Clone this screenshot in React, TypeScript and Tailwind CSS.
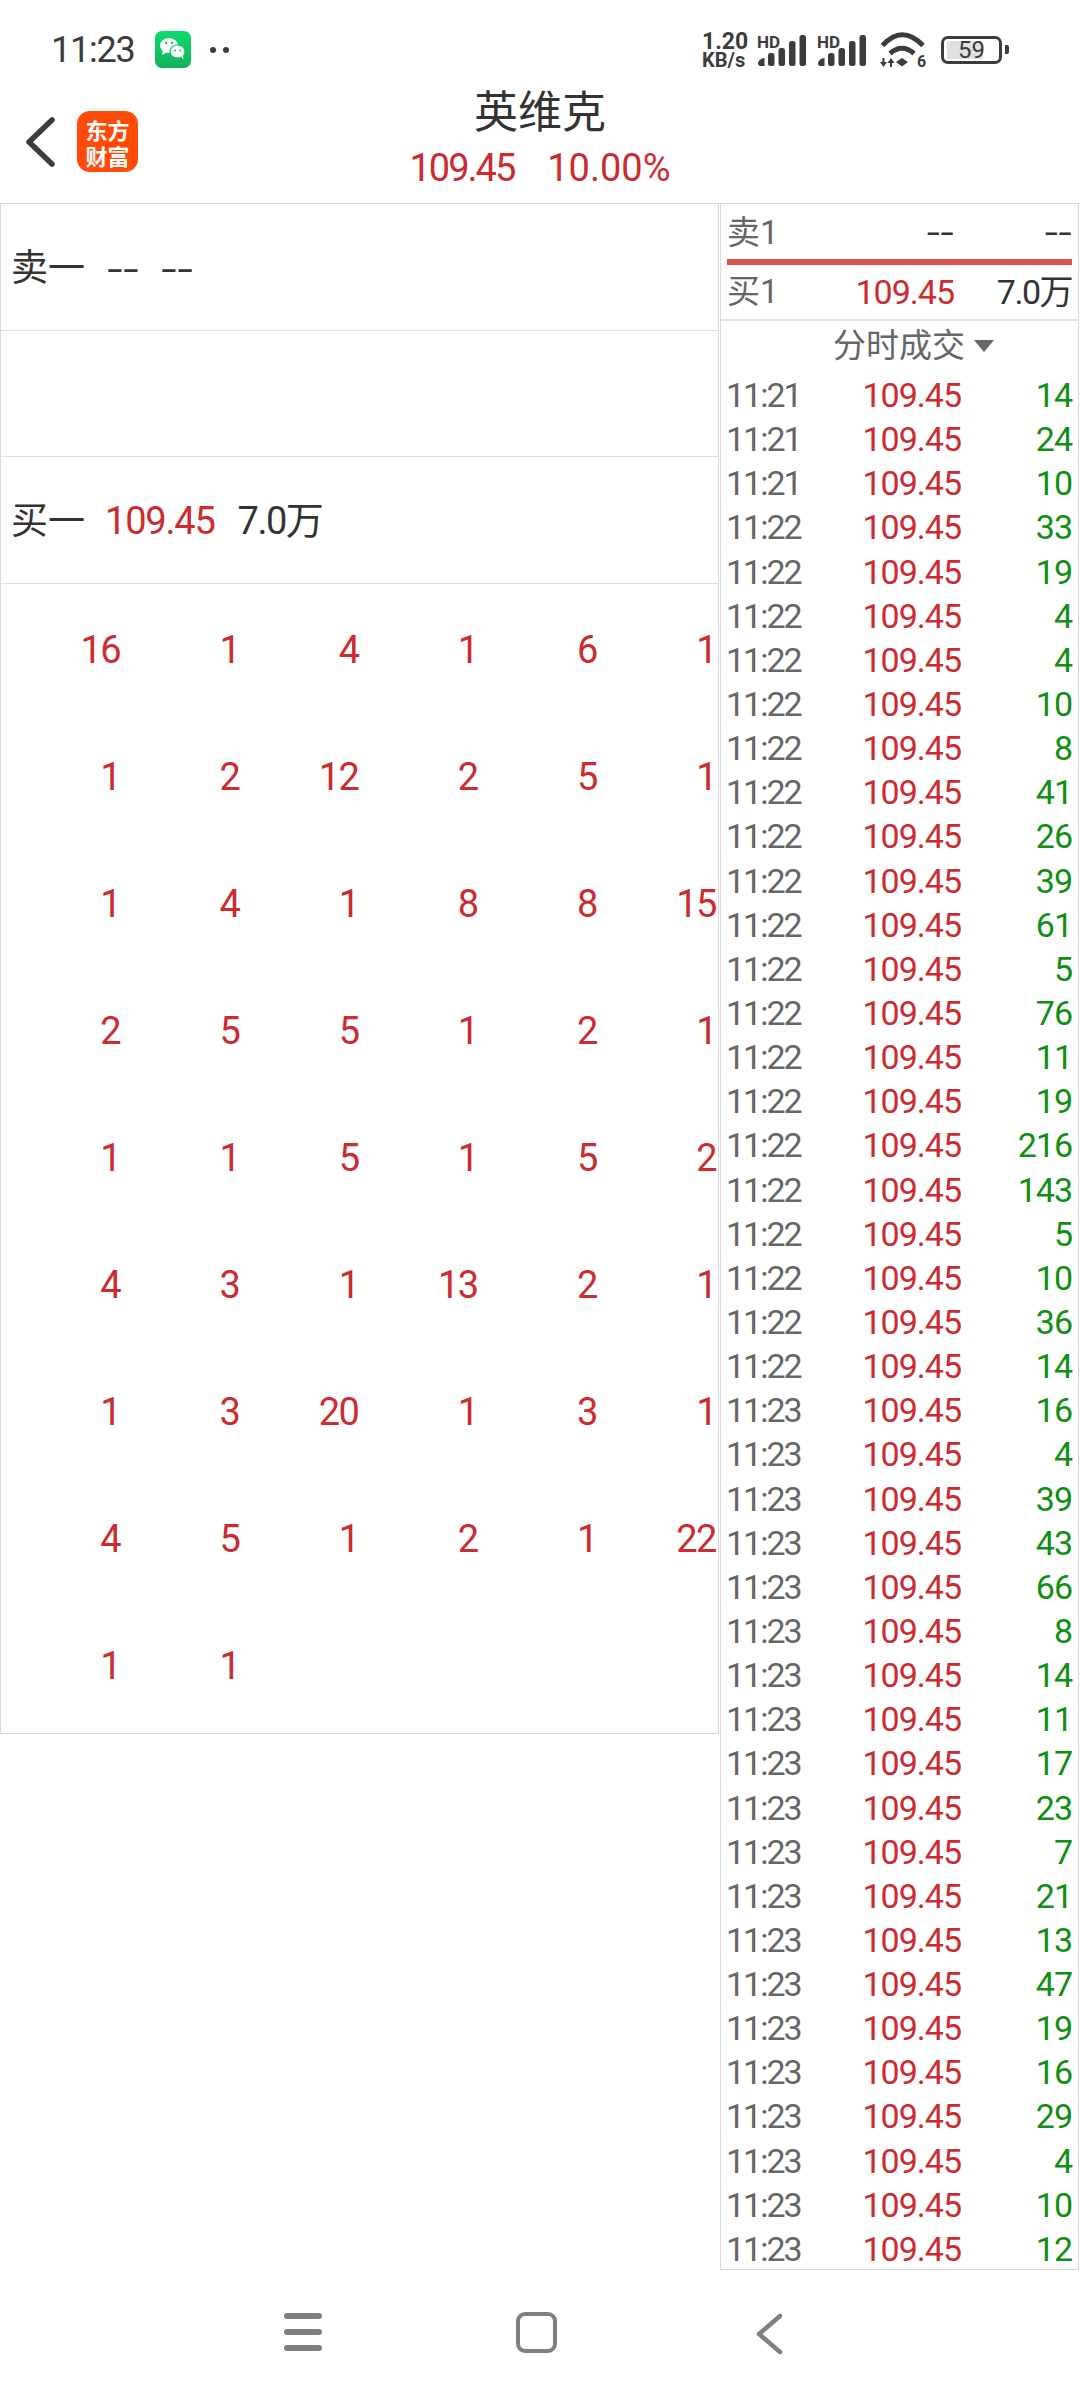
import React from 'react';

const sans = "font-['Roboto','Noto_Sans_CJK_SC',sans-serif]";

const gridValues = [
  16, 1, 4, 1, 6, 1,
  1, 2, 12, 2, 5, 1,
  1, 4, 1, 8, 8, 15,
  2, 5, 5, 1, 2, 1,
  1, 1, 5, 1, 5, 2,
  4, 3, 1, 13, 2, 1,
  1, 3, 20, 1, 3, 1,
  4, 5, 1, 2, 1, 22,
  1, 1,
];

const ticks: [string, number][] = [
  ['11:21', 14], ['11:21', 24], ['11:21', 10],
  ['11:22', 33], ['11:22', 19], ['11:22', 4], ['11:22', 4], ['11:22', 10],
  ['11:22', 8], ['11:22', 41], ['11:22', 26], ['11:22', 39], ['11:22', 61],
  ['11:22', 5], ['11:22', 76], ['11:22', 11], ['11:22', 19], ['11:22', 216],
  ['11:22', 143], ['11:22', 5], ['11:22', 10], ['11:22', 36], ['11:22', 14],
  ['11:23', 16], ['11:23', 4], ['11:23', 39], ['11:23', 43], ['11:23', 66],
  ['11:23', 8], ['11:23', 14], ['11:23', 11], ['11:23', 17], ['11:23', 23],
  ['11:23', 7], ['11:23', 21], ['11:23', 13], ['11:23', 47], ['11:23', 19],
  ['11:23', 16], ['11:23', 29], ['11:23', 4], ['11:23', 10], ['11:23', 12],
];

function Signal() {
  return (
    <div className="relative w-[50px] h-[32px]">
      <span className="absolute left-0 top-0 text-[17px] leading-[17px] font-bold text-[#3c3c3c] font-['Roboto',sans-serif]">HD</span>
      <svg className="absolute left-0 top-0" width="50" height="32" viewBox="0 0 50 32" fill="#3c3c3c">
        <path d="M1 29.5C1 27 4 24 7.5 24v8H3.5C2 32 1 31 1 29.5z" />
        <rect x="11" y="19" width="6.5" height="13" rx="2.5" />
        <rect x="21.5" y="14" width="6.5" height="18" rx="2.5" />
        <rect x="32" y="7" width="6.5" height="25" rx="2.5" />
        <rect x="42.5" y="1" width="6.5" height="31" rx="2.5" />
      </svg>
    </div>
  );
}

function Wifi() {
  return (
    <div className="relative ml-[13px] w-[46px] h-[36px]">
      <svg width="46" height="36" viewBox="0 0 46 36" fill="none" stroke="#3c3c3c">
        <path d="M2.5 13.5Q22 -8 43 13.5" strokeWidth="5" />
        <path d="M10 21.5Q22 11 34 21.5" strokeWidth="5" />
        <path d="M16 30l6-4 6 4-6 4.5z" fill="#3c3c3c" stroke="none" />
        <path d="M0 30h2.5v-4h2v4H7l-3.5 5zM7.5 31l3.5-5 3.5 5H12v4h-2v-4z" fill="#3c3c3c" stroke="none" />
      </svg>
      <span className="absolute left-[37px] top-[22px] text-[16px] leading-[16px] font-bold text-[#3c3c3c] font-['Roboto',sans-serif]">6</span>
    </div>
  );
}

function StatusBar() {
  return (
    <div className={`flex items-center h-[86px] pt-[13px] pl-[51px] pr-[71px] ${sans}`}>
      <span className="text-[36px] leading-[36px] text-[#3c3c3c] w-[104px] tracking-[-1.2px]">11:23</span>
      <svg width="36" height="37" viewBox="0 0 36 37">
        <defs>
          <linearGradient id="wechatBg" x1="0" y1="0" x2="0" y2="1">
            <stop offset="0" stopColor="#08dc6c" />
            <stop offset="1" stopColor="#14b25a" />
          </linearGradient>
        </defs>
        <rect width="36" height="37" rx="7" fill="url(#wechatBg)" />
        <ellipse cx="14" cy="14.5" rx="9" ry="7.5" fill="#fff" />
        <path d="M8 19l-1 5 5-3z" fill="#fff" />
        <ellipse cx="22.5" cy="20.5" rx="7.5" ry="6.5" fill="#fff" stroke="#0fc764" strokeWidth="1.2" />
        <path d="M26 25.5l2.5 3-.5-4.5z" fill="#fff" />
        <circle cx="11" cy="12" r="1.2" fill="#0fc764" />
        <circle cx="17" cy="12" r="1.2" fill="#0fc764" />
        <circle cx="20" cy="19.5" r="1" fill="#0fc764" />
        <circle cx="25" cy="19.5" r="1" fill="#0fc764" />
      </svg>
      <div className="flex gap-[7px] ml-[19px]">
        <span className="w-[6px] h-[6px] rounded-full bg-[#3c3c3c]" />
        <span className="w-[6px] h-[6px] rounded-full bg-[#3c3c3c]" />
      </div>
      <div className="flex-1" />
      <div className="flex flex-col w-[55px] mt-[2px] text-[#3c3c3c] font-bold font-['Roboto',sans-serif]">
        <span className="text-[23px] leading-[19px]">1.20</span>
        <span className="text-[20px] leading-[19px]">KB/s</span>
      </div>
      <div className="flex gap-[10px]">
        <Signal />
        <Signal />
      </div>
      <Wifi />
      <div className="ml-[15px] w-[61px] h-[28px] rounded-[7px] border-[3px] border-[#3c3c3c] px-[3px] py-[2px] relative">
        <div className="w-[36px] h-full bg-[#e0e0e0] rounded-[2px]" />
        <span className="absolute inset-0 flex items-center justify-center text-[24px] leading-none text-[#3c3c3c]">59</span>
      </div>
      <div className="ml-[3px] w-[4px] h-[9px] rounded-r-[2px] bg-[#3c3c3c]" />
    </div>
  );
}

function Header() {
  return (
    <div className={`grid grid-cols-[1fr_auto_1fr] h-[117px] ${sans}`}>
      <div className="flex items-start pt-[25px] pl-[25px]">
        <svg className="mt-[6px]" width="30" height="50" viewBox="0 0 30 50" fill="none" stroke="#3c3c3c" strokeWidth="5.5" strokeLinecap="round" strokeLinejoin="round">
          <path d="M27 3L4 25l23 22" />
        </svg>
        <div className="ml-[22px] w-[61px] h-[61px] rounded-[13px] bg-[#ff4a08] flex flex-col items-center justify-center text-white text-[22px] font-bold font-['Noto_Sans_CJK_SC',sans-serif]">
          <span className="block h-[26px] leading-[26px]">东方</span>
          <span className="block h-[26px] leading-[26px]">财富</span>
        </div>
      </div>
      <div className="flex flex-col items-center">
        <span className="text-[44px] leading-[50px] mt-[2px] text-[#333333]">英维克</span>
        <div className="flex gap-[33px] mt-[12px] text-[38px] leading-[36px] text-[#cc2b2f]">
          <span className="tracking-[-2px]">109.45</span>
          <span>10.00%</span>
        </div>
      </div>
      <div />
    </div>
  );
}

function LeftPanel() {
  return (
    <div className={`w-[719px] self-start border-l-[1px] border-r-[1px] border-[#d9d9d9] text-[37px] text-[#333333] ${sans}`}>
      <div className="h-[127px] border-b-[1.5px] border-[#dddddd] flex items-center pl-[10px] pt-[3px]">
        <span>卖一</span>
        <span className="ml-[22px] text-[56px] leading-none font-light">--</span>
        <span className="ml-[22px] text-[56px] leading-none font-light">--</span>
      </div>
      <div className="h-[126px] border-b-[1.5px] border-[#dddddd]" />
      <div className="h-[127px] border-b-[1.5px] border-[#dddddd] flex items-center pl-[10px] pt-[3px]">
        <span>买一</span>
        <span className="ml-[20px] text-[38px] tracking-[-1.2px] text-[#cc2b2f]">109.45</span>
        <span className="ml-[23px] text-[38px] tracking-[-1.5px]">7.0万</span>
      </div>
      <div className="grid grid-cols-6 pr-[2px] pt-[3px] pb-[3px] border-b-[1.5px] border-[#d9d9d9] text-[38px] tracking-[-1.5px] text-[#cc2b2f]">
        {gridValues.map((value, index) => (
          <div key={index} className="h-[127px] flex items-center justify-end">
            {value}
          </div>
        ))}
      </div>
    </div>
  );
}

function RightPanel() {
  return (
    <div className={`w-[359px] ml-[1px] h-[2066px] border-l-[1.5px] border-r-[1px] border-b-[1.5px] border-[#d9d9d9] ${sans}`}>
      <div className="h-[117px] border-b-[2px] border-[#e4e4e4] px-[6px]">
        <div className="flex items-center h-[61px] border-b-[6px] border-[#d9534f] text-[33px] pt-[3px]">
          <span className="text-[#666666]">卖1</span>
          <span className="ml-auto text-[#333333] text-[48px] leading-none font-light">--</span>
          <span className="w-[118px] text-right text-[#333333] text-[48px] leading-none font-light">--</span>
        </div>
        <div className="flex items-center h-[54px] text-[34px]">
          <span className="text-[33px] text-[#666666]">买1</span>
          <span className="ml-auto tracking-[-1px] text-[#cc2b2f]">109.45</span>
          <span className="w-[118px] text-right tracking-[-1.5px] text-[#333333]">7.0万</span>
        </div>
      </div>
      <div className="flex items-center justify-center gap-[9px] h-[49px] pl-[28px] text-[33px] text-[#666666]">
        <span>分时成交</span>
        <svg width="20" height="12" viewBox="0 0 20 12" fill="#666666">
          <path d="M0 0h20L10 12z" />
        </svg>
      </div>
      <div className="pl-[5px] pr-[6px]">
        {ticks.map(([time, volume], index) => (
          <div key={index} className="grid grid-cols-[1fr_auto_111px] items-center h-[44.15px] text-[34px] tracking-[-1px]">
            <span className="text-[#666666] tracking-[-2px]">{time}</span>
            <span className="text-[#cc2b2f]">109.45</span>
            <span className="text-right text-[#0f8f14]">{volume}</span>
          </div>
        ))}
      </div>
    </div>
  );
}

function NavBar() {
  return (
    <div className="flex items-start h-[131px]">
      <div className="flex flex-col gap-[10px] ml-[284px] mt-[43px] w-[38px]">
        <span className="h-[6px] rounded-[3px] bg-[#808080]" />
        <span className="h-[6px] rounded-[3px] bg-[#808080]" />
        <span className="h-[6px] rounded-[3px] bg-[#808080]" />
      </div>
      <div className="ml-[194px] mt-[42px] w-[41px] h-[41px] rounded-[9px] border-[4px] border-[#808080]" />
      <svg className="ml-[198px] mt-[43px]" width="28" height="42" viewBox="0 0 28 42" fill="none" stroke="#808080" strokeWidth="4.5" strokeLinecap="round" strokeLinejoin="round">
        <path d="M25 3L4 21l21 18" />
      </svg>
    </div>
  );
}

export default function App() {
  return (
    <div className="w-[1080px] h-[2400px] bg-white overflow-hidden">
      <StatusBar />
      <Header />
      <div className="flex border-t-[1.5px] border-[#d9d9d9]">
        <LeftPanel />
        <RightPanel />
      </div>
      <NavBar />
    </div>
  );
}
